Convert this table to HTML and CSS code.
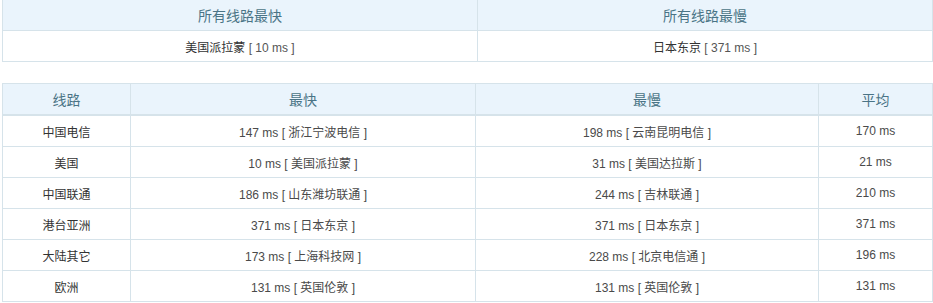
FILE: index.html
```html
<!DOCTYPE html>
<html lang="zh-CN">
<head>
<meta charset="utf-8">
<title>线路测速</title>
<link rel="stylesheet" href="styles.css">
</head>
<body>
<div class="wrap">
  <table class="tbl summary">
    <colgroup><col class="s1"><col class="s2"></colgroup>
    <thead>
      <tr><th>所有线路最快</th><th>所有线路最慢</th></tr>
    </thead>
    <tbody>
      <tr><td>美国派拉蒙 <span class="ms">[ 10 ms ]</span></td><td>日本东京 <span class="ms">[ 371 ms ]</span></td></tr>
    </tbody>
  </table>

  <table class="tbl detail">
    <colgroup><col class="c1"><col class="c2"><col class="c3"><col class="c4"></colgroup>
    <thead>
      <tr><th>线路</th><th>最快</th><th>最慢</th><th>平均</th></tr>
    </thead>
    <tbody>
      <tr><td class="name">中国电信</td><td>147 ms [ 浙江宁波电信 ]</td><td>198 ms [ 云南昆明电信 ]</td><td>170 ms</td></tr>
      <tr><td class="name">美国</td><td>10 ms [ 美国派拉蒙 ]</td><td>31 ms [ 美国达拉斯 ]</td><td>21 ms</td></tr>
      <tr><td class="name">中国联通</td><td>186 ms [ 山东潍坊联通 ]</td><td>244 ms [ 吉林联通 ]</td><td>210 ms</td></tr>
      <tr><td class="name">港台亚洲</td><td>371 ms [ 日本东京 ]</td><td>371 ms [ 日本东京 ]</td><td>371 ms</td></tr>
      <tr><td class="name">大陆其它</td><td>173 ms [ 上海科技网 ]</td><td>228 ms [ 北京电信通 ]</td><td>196 ms</td></tr>
      <tr><td class="name">欧洲</td><td>131 ms [ 英国伦敦 ]</td><td>131 ms [ 英国伦敦 ]</td><td>131 ms</td></tr>
    </tbody>
  </table>
</div>
</body>
</html>
```

FILE: styles.css
```css
html, body {
  margin: 0;
  padding: 0;
  background: #ffffff;
}
.wrap {
  padding: 0 2px 0 2px;
  width: 930px;
  font-family: "Liberation Sans", Arial, "Noto Sans CJK SC", sans-serif;
}
.tbl {
  width: 930px;
  border-collapse: collapse;
  table-layout: fixed;
}
.tbl th,
.tbl td {
  border: 1px solid #d6e3ea;
  text-align: center;
  padding: 0;
}
.tbl th {
  background: #eaf4fc;
  color: #4a7486;
  font-weight: normal;
  font-size: 14px;
  height: 30px;
}
.tbl td {
  color: #4a4a4a;
  font-size: 12px;
  height: 30px;
}
.summary th {
  border-top: none;
}
.summary td {
  color: #333333;
}
.summary .ms {
  color: #555555;
}
.s1 { width: 475px; }
.s2 { width: 455px; }
.detail {
  margin-top: 21px;
}
.detail thead th {
  border-bottom: 2px solid #d6e3ea;
}
.detail td.name {
  color: #333333;
}
.c1 { width: 128px; }
.c2 { width: 345px; }
.c3 { width: 343px; }
.c4 { width: 114px; }
```
